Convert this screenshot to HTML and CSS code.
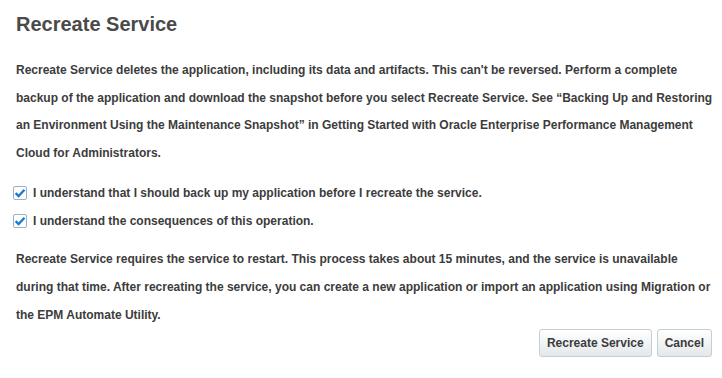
FILE: index.html
```html
<!DOCTYPE html>
<html lang="en">
<head>
    <meta charset="UTF-8">
    <title>Recreate Service</title>
    <link rel="stylesheet" href="styles.css">
</head>
<body>
    <div class="dialog">
        <h1>Recreate Service</h1>
        <p class="text">Recreate Service deletes the application, including its data and artifacts. This can't be reversed. Perform a complete backup of the application and download the snapshot before you select Recreate Service. See &ldquo;Backing Up and Restoring an Environment Using the Maintenance Snapshot&rdquo; in Getting Started with Oracle Enterprise Performance Management Cloud for Administrators.</p>
        <div class="checks">
            <label class="check">
                <span class="box"><svg width="12" height="12" viewBox="0 0 12 12"><path d="M1.6 6.1 L4.6 9 L10.5 2.8" fill="none" stroke="#1a7ad4" stroke-width="2.3"/></svg></span>
                I understand that I should back up my application before I recreate the service.
            </label>
            <label class="check">
                <span class="box"><svg width="12" height="12" viewBox="0 0 12 12"><path d="M1.6 6.1 L4.6 9 L10.5 2.8" fill="none" stroke="#1a7ad4" stroke-width="2.3"/></svg></span>
                I understand the consequences of this operation.
            </label>
        </div>
        <p class="text">Recreate Service requires the service to restart. This process takes about 15 minutes, and the service is unavailable during that time. After recreating the service, you can create a new application or import an application using Migration or the EPM Automate Utility.</p>
        <div class="actions">
            <button class="btn">Recreate Service</button>
            <button class="btn">Cancel</button>
        </div>
    </div>
</body>
</html>
```

FILE: styles.css
```css
body {
    margin: 0;
    background-color: #fff;
    font-family: "Liberation Sans", Arial, sans-serif;
    color: #3c3c3c;
}
.dialog {
    padding: 12px 8px 0 16px;
}
h1 {
    margin: 0 0 21px;
    font-size: 20px;
    font-weight: bold;
    color: #4a4a4a;
    line-height: 24px;
}
.text {
    margin: 0;
    font-size: 12px;
    font-weight: bold;
    line-height: 27.5px;
}
.checks {
    margin: 12px 0 10px -3px;
}
.check {
    display: flex;
    align-items: center;
    gap: 6px;
    font-size: 12px;
    font-weight: bold;
    height: 28px;
}
.box {
    width: 14px;
    height: 14px;
    box-sizing: border-box;
    border: 1px solid #9fb0c0;
    border-radius: 2px;
    display: flex;
    align-items: center;
    justify-content: center;
    background-color: #fff;
}
.checks + .text {
    line-height: 28px;
}
.actions {
    display: flex;
    justify-content: flex-end;
    gap: 5px;
    padding-right: 2px;
}
.btn {
    font-family: "Liberation Sans", Arial, sans-serif;
    font-size: 12px;
    font-weight: bold;
    color: #3c3c3c;
    height: 28px;
    padding: 0 7px;
    border: 1px solid #c4ced7;
    border-radius: 3px;
    background: linear-gradient(#ffffff, #e4e8ea);
}
```
